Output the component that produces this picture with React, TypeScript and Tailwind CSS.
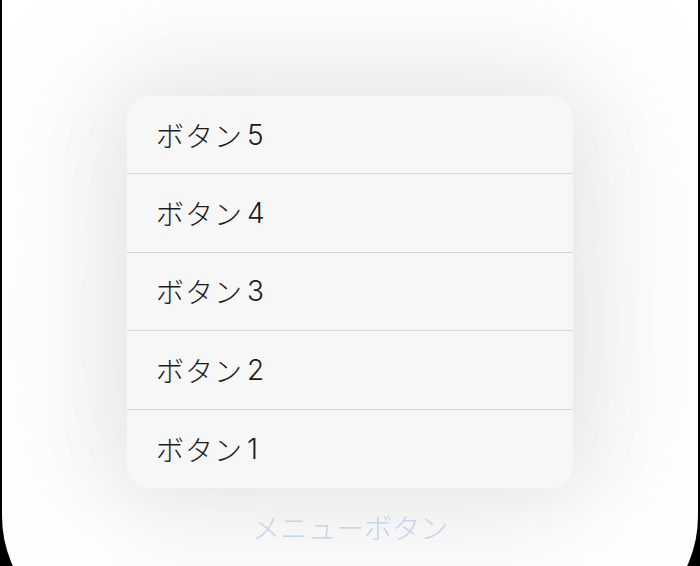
const items = ['ボタン5', 'ボタン4', 'ボタン3', 'ボタン2', 'ボタン1'];

export default function App() {
  return (
    <div className="h-[566px] w-[700px] overflow-hidden bg-black px-[2px]">
      <div
        className="flex h-[636px] flex-col items-center rounded-b-[120px] bg-white pt-[96px]"
        style={{ fontFamily: '"Noto Sans CJK JP", "Noto Sans", sans-serif' }}
      >
        <div className="w-[446px] overflow-hidden rounded-[22px] bg-[#f7f7f7] shadow-[0_0_90px_10px_rgba(0,0,0,0.07),0_0_180px_40px_rgba(0,0,0,0.06)]">
          {items.map((label, i) => (
            <div
              key={label}
              className={
                'flex h-[78.4px] items-center pl-[29px] text-[28px] font-light leading-none tracking-[1px] text-[#1c1c1c] ' +
                (i < items.length - 1 ? 'border-b border-[#d5d5d5]' : '')
              }
            >
              {label.slice(0, 3)}
              <span className="ml-[4px] font-['Inter'] font-light">{label.slice(3)}</span>
            </div>
          ))}
        </div>
        <div className="mt-[25px] text-[28px] font-light leading-none text-[#c4d6ed]">メニューボタン</div>
      </div>
    </div>
  );
}
